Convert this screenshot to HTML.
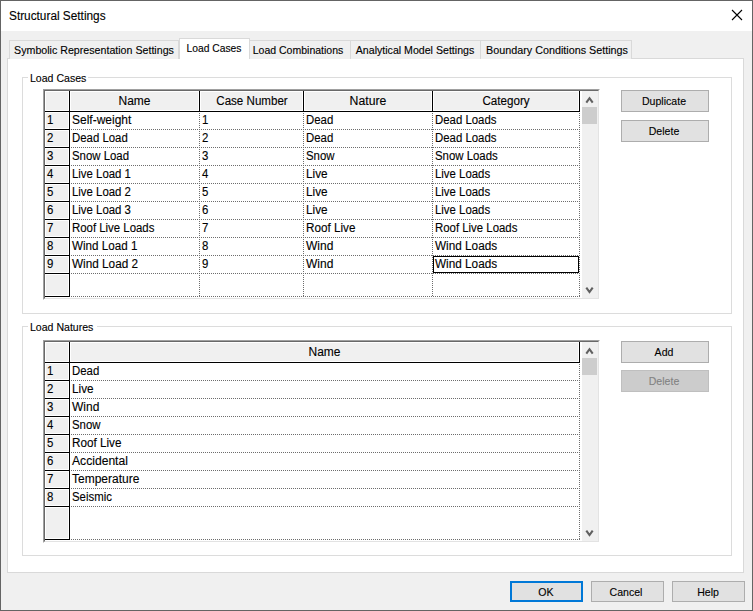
<!DOCTYPE html><html><head><meta charset="utf-8"><style>
*{box-sizing:border-box;margin:0;padding:0}
html,body{width:753px;height:611px;overflow:hidden;background:#f0f0f0}
body{position:relative;font-family:"Liberation Sans",sans-serif;font-size:12px;color:#000}
.a{position:absolute}
i.t{font-style:normal;-webkit-text-stroke:0.12px currentColor;display:inline-block;white-space:nowrap;transform-origin:0 0}
i.c{position:absolute;left:50%;top:0;transform-origin:50% 0}
.win{left:0;top:0;width:753px;height:611px;border:1px solid #646464;background:#f0f0f0}
.title{left:1px;top:1px;width:751px;height:30px;background:#fff}
.lbl{line-height:14px;height:14px}
.tab{background:#f0f0f0;border:1px solid #d9d9d9;border-bottom:none;height:19px;top:40px}
.tab.act{background:#fff;top:38px;height:21px;z-index:3}
.panel{left:7px;top:58px;width:737px;height:515px;background:#fff;border:1px solid #d9d9d9}
.grp{border:1px solid #dcdcdc}
.btn{background:#e1e1e1;border:1px solid #adadad;text-align:center}
.btn.dis{background:#cccccc;border-color:#bfbfbf;color:#838383}
.grid{background:#fff;border:1px solid #fff;border-left-color:#a0a0a0;border-top-color:#a0a0a0}
.gin{position:absolute;left:0;top:0;right:0;bottom:0;border:1px solid #e3e3e3;border-left-color:#696969;border-top-color:#696969}
.hc{position:absolute;background:#f0f0f0;border:1px solid #fff}
.bl{position:absolute;background:#000}
.dh{position:absolute;height:1px;background-image:linear-gradient(to right,#6d6d6d 50%,transparent 50%);background-size:2px 1px;background-position:1px 0}
.dv{position:absolute;width:1px;background-image:linear-gradient(to bottom,#6d6d6d 50%,transparent 50%);background-size:1px 2px;background-position:0 1px}
.sb{position:absolute;background:#f0f0f0}
</style></head><body><div class="a win"></div>
<div class="a title"></div>
<div class="a lbl" style="left:9px;top:9px"><i class="t" style="font-size:12px;transform:scaleX(0.985)">Structural Settings</i></div>
<svg class="a" style="left:727px;top:5px" width="20" height="20" viewBox="0 0 20 20"><path d="M5 5 L15 15 M15 5 L5 15" stroke="#000" stroke-width="1.1" fill="none"/></svg>
<div class="a panel"></div>
<div class="a tab" style="left:9px;width:170px"></div>
<div class="a lbl" style="left:94.25px;width:0;top:43px;z-index:4"><i class="t c" style="font-size:11px;transform:translateX(-50%) scaleX(0.968)">Symbolic Representation Settings</i></div>
<div class="a tab act" style="left:179px;width:71px"></div>
<div class="a lbl" style="left:213.85px;width:0;top:41px;z-index:4"><i class="t c" style="font-size:11px;transform:translateX(-50%) scaleX(0.936)">Load Cases</i></div>
<div class="a tab" style="left:249px;width:102px"></div>
<div class="a lbl" style="left:298.4px;width:0;top:43px;z-index:4"><i class="t c" style="font-size:11px;transform:translateX(-50%) scaleX(0.955)">Load Combinations</i></div>
<div class="a tab" style="left:350px;width:131px"></div>
<div class="a lbl" style="left:415.2px;width:0;top:43px;z-index:4"><i class="t c" style="font-size:11px;transform:translateX(-50%) scaleX(0.964)">Analytical Model Settings</i></div>
<div class="a tab" style="left:480px;width:152px"></div>
<div class="a lbl" style="left:556.8px;width:0;top:43px;z-index:4"><i class="t c" style="font-size:11px;transform:translateX(-50%) scaleX(0.979)">Boundary Conditions Settings</i></div>
<div class="a grp" style="left:22px;top:77px;width:710px;height:237px"></div>
<div class="a" style="left:28px;top:76px;width:60px;height:3px;background:#fff"></div>
<div class="a lbl" style="left:30px;top:71px"><i class="t" style="font-size:11px;transform:scaleX(0.96)">Load Cases</i></div>
<div class="a grp" style="left:22px;top:326px;width:710px;height:230px"></div>
<div class="a" style="left:28px;top:325px;width:69px;height:3px;background:#fff"></div>
<div class="a lbl" style="left:30px;top:320px"><i class="t" style="font-size:11px;transform:scaleX(0.96)">Load Natures</i></div>
<div class="a grid" style="left:43px;top:89px;width:557px;height:211px"><div class="gin"></div></div>
<div class="hc" style="left:45px;top:91px;width:24px;height:20px"></div>
<div class="hc" style="left:70px;top:91px;width:129px;height:20px"></div>
<div class="a lbl" style="left:70px;width:129px;top:94px"><i class="t c" style="font-size:12px;transform:translateX(-50%) scaleX(1.0)">Name</i></div>
<div class="hc" style="left:200px;top:91px;width:103px;height:20px"></div>
<div class="a lbl" style="left:200px;width:103px;top:94px"><i class="t c" style="font-size:12px;transform:translateX(-50%) scaleX(0.965)">Case Number</i></div>
<div class="hc" style="left:304px;top:91px;width:128px;height:20px"></div>
<div class="a lbl" style="left:304px;width:128px;top:94px"><i class="t c" style="font-size:12px;transform:translateX(-50%) scaleX(1.02)">Nature</i></div>
<div class="hc" style="left:433px;top:91px;width:146px;height:20px"></div>
<div class="a lbl" style="left:433px;width:146px;top:94px"><i class="t c" style="font-size:12px;transform:translateX(-50%) scaleX(0.97)">Category</i></div>
<div class="bl" style="left:69px;top:91px;width:1px;height:21px"></div>
<div class="bl" style="left:199px;top:91px;width:1px;height:21px"></div>
<div class="bl" style="left:303px;top:91px;width:1px;height:21px"></div>
<div class="bl" style="left:432px;top:91px;width:1px;height:21px"></div>
<div class="bl" style="left:579px;top:91px;width:1px;height:21px"></div>
<div class="bl" style="left:45px;top:111px;width:535px;height:1px"></div>
<div class="hc" style="left:45px;top:112px;width:24px;height:17px"></div>
<div class="bl" style="left:45px;top:129px;width:25px;height:1px"></div>
<div class="bl" style="left:69px;top:112px;width:1px;height:18px"></div>
<div class="dh" style="left:70px;top:129px;width:510px"></div>
<div class="dv" style="left:199px;top:112px;height:18px"></div>
<div class="dv" style="left:303px;top:112px;height:18px"></div>
<div class="dv" style="left:432px;top:112px;height:18px"></div>
<div class="dv" style="left:579px;top:112px;height:18px"></div>
<div class="a lbl" style="left:47px;top:113px"><i class="t" style="font-size:12px;transform:scaleX(0.95)">1</i></div>
<div class="a lbl" style="left:72px;top:113px"><i class="t" style="font-size:12px;transform:scaleX(1.0)">Self-weight</i></div>
<div class="a lbl" style="left:202px;top:113px"><i class="t" style="font-size:12px;transform:scaleX(0.95)">1</i></div>
<div class="a lbl" style="left:306px;top:113px"><i class="t" style="font-size:12px;transform:scaleX(0.95)">Dead</i></div>
<div class="a lbl" style="left:435px;top:113px"><i class="t" style="font-size:12px;transform:scaleX(0.95)">Dead Loads</i></div>
<div class="hc" style="left:45px;top:130px;width:24px;height:17px"></div>
<div class="bl" style="left:45px;top:147px;width:25px;height:1px"></div>
<div class="bl" style="left:69px;top:130px;width:1px;height:18px"></div>
<div class="dh" style="left:70px;top:147px;width:510px"></div>
<div class="dv" style="left:199px;top:130px;height:18px"></div>
<div class="dv" style="left:303px;top:130px;height:18px"></div>
<div class="dv" style="left:432px;top:130px;height:18px"></div>
<div class="dv" style="left:579px;top:130px;height:18px"></div>
<div class="a lbl" style="left:47px;top:131px"><i class="t" style="font-size:12px;transform:scaleX(0.95)">2</i></div>
<div class="a lbl" style="left:72px;top:131px"><i class="t" style="font-size:12px;transform:scaleX(0.95)">Dead Load</i></div>
<div class="a lbl" style="left:202px;top:131px"><i class="t" style="font-size:12px;transform:scaleX(0.95)">2</i></div>
<div class="a lbl" style="left:306px;top:131px"><i class="t" style="font-size:12px;transform:scaleX(0.95)">Dead</i></div>
<div class="a lbl" style="left:435px;top:131px"><i class="t" style="font-size:12px;transform:scaleX(0.95)">Dead Loads</i></div>
<div class="hc" style="left:45px;top:148px;width:24px;height:17px"></div>
<div class="bl" style="left:45px;top:165px;width:25px;height:1px"></div>
<div class="bl" style="left:69px;top:148px;width:1px;height:18px"></div>
<div class="dh" style="left:70px;top:165px;width:510px"></div>
<div class="dv" style="left:199px;top:148px;height:18px"></div>
<div class="dv" style="left:303px;top:148px;height:18px"></div>
<div class="dv" style="left:432px;top:148px;height:18px"></div>
<div class="dv" style="left:579px;top:148px;height:18px"></div>
<div class="a lbl" style="left:47px;top:149px"><i class="t" style="font-size:12px;transform:scaleX(0.95)">3</i></div>
<div class="a lbl" style="left:72px;top:149px"><i class="t" style="font-size:12px;transform:scaleX(0.95)">Snow Load</i></div>
<div class="a lbl" style="left:202px;top:149px"><i class="t" style="font-size:12px;transform:scaleX(0.95)">3</i></div>
<div class="a lbl" style="left:306px;top:149px"><i class="t" style="font-size:12px;transform:scaleX(0.95)">Snow</i></div>
<div class="a lbl" style="left:435px;top:149px"><i class="t" style="font-size:12px;transform:scaleX(0.95)">Snow Loads</i></div>
<div class="hc" style="left:45px;top:166px;width:24px;height:17px"></div>
<div class="bl" style="left:45px;top:183px;width:25px;height:1px"></div>
<div class="bl" style="left:69px;top:166px;width:1px;height:18px"></div>
<div class="dh" style="left:70px;top:183px;width:510px"></div>
<div class="dv" style="left:199px;top:166px;height:18px"></div>
<div class="dv" style="left:303px;top:166px;height:18px"></div>
<div class="dv" style="left:432px;top:166px;height:18px"></div>
<div class="dv" style="left:579px;top:166px;height:18px"></div>
<div class="a lbl" style="left:47px;top:167px"><i class="t" style="font-size:12px;transform:scaleX(0.95)">4</i></div>
<div class="a lbl" style="left:72px;top:167px"><i class="t" style="font-size:12px;transform:scaleX(0.95)">Live Load 1</i></div>
<div class="a lbl" style="left:202px;top:167px"><i class="t" style="font-size:12px;transform:scaleX(0.95)">4</i></div>
<div class="a lbl" style="left:306px;top:167px"><i class="t" style="font-size:12px;transform:scaleX(0.98)">Live</i></div>
<div class="a lbl" style="left:435px;top:167px"><i class="t" style="font-size:12px;transform:scaleX(0.95)">Live Loads</i></div>
<div class="hc" style="left:45px;top:184px;width:24px;height:17px"></div>
<div class="bl" style="left:45px;top:201px;width:25px;height:1px"></div>
<div class="bl" style="left:69px;top:184px;width:1px;height:18px"></div>
<div class="dh" style="left:70px;top:201px;width:510px"></div>
<div class="dv" style="left:199px;top:184px;height:18px"></div>
<div class="dv" style="left:303px;top:184px;height:18px"></div>
<div class="dv" style="left:432px;top:184px;height:18px"></div>
<div class="dv" style="left:579px;top:184px;height:18px"></div>
<div class="a lbl" style="left:47px;top:185px"><i class="t" style="font-size:12px;transform:scaleX(0.95)">5</i></div>
<div class="a lbl" style="left:72px;top:185px"><i class="t" style="font-size:12px;transform:scaleX(0.95)">Live Load 2</i></div>
<div class="a lbl" style="left:202px;top:185px"><i class="t" style="font-size:12px;transform:scaleX(0.95)">5</i></div>
<div class="a lbl" style="left:306px;top:185px"><i class="t" style="font-size:12px;transform:scaleX(0.98)">Live</i></div>
<div class="a lbl" style="left:435px;top:185px"><i class="t" style="font-size:12px;transform:scaleX(0.95)">Live Loads</i></div>
<div class="hc" style="left:45px;top:202px;width:24px;height:17px"></div>
<div class="bl" style="left:45px;top:219px;width:25px;height:1px"></div>
<div class="bl" style="left:69px;top:202px;width:1px;height:18px"></div>
<div class="dh" style="left:70px;top:219px;width:510px"></div>
<div class="dv" style="left:199px;top:202px;height:18px"></div>
<div class="dv" style="left:303px;top:202px;height:18px"></div>
<div class="dv" style="left:432px;top:202px;height:18px"></div>
<div class="dv" style="left:579px;top:202px;height:18px"></div>
<div class="a lbl" style="left:47px;top:203px"><i class="t" style="font-size:12px;transform:scaleX(0.95)">6</i></div>
<div class="a lbl" style="left:72px;top:203px"><i class="t" style="font-size:12px;transform:scaleX(0.95)">Live Load 3</i></div>
<div class="a lbl" style="left:202px;top:203px"><i class="t" style="font-size:12px;transform:scaleX(0.95)">6</i></div>
<div class="a lbl" style="left:306px;top:203px"><i class="t" style="font-size:12px;transform:scaleX(0.98)">Live</i></div>
<div class="a lbl" style="left:435px;top:203px"><i class="t" style="font-size:12px;transform:scaleX(0.95)">Live Loads</i></div>
<div class="hc" style="left:45px;top:220px;width:24px;height:17px"></div>
<div class="bl" style="left:45px;top:237px;width:25px;height:1px"></div>
<div class="bl" style="left:69px;top:220px;width:1px;height:18px"></div>
<div class="dh" style="left:70px;top:237px;width:510px"></div>
<div class="dv" style="left:199px;top:220px;height:18px"></div>
<div class="dv" style="left:303px;top:220px;height:18px"></div>
<div class="dv" style="left:432px;top:220px;height:18px"></div>
<div class="dv" style="left:579px;top:220px;height:18px"></div>
<div class="a lbl" style="left:47px;top:221px"><i class="t" style="font-size:12px;transform:scaleX(0.95)">7</i></div>
<div class="a lbl" style="left:72px;top:221px"><i class="t" style="font-size:12px;transform:scaleX(0.95)">Roof Live Loads</i></div>
<div class="a lbl" style="left:202px;top:221px"><i class="t" style="font-size:12px;transform:scaleX(0.95)">7</i></div>
<div class="a lbl" style="left:306px;top:221px"><i class="t" style="font-size:12px;transform:scaleX(0.975)">Roof Live</i></div>
<div class="a lbl" style="left:435px;top:221px"><i class="t" style="font-size:12px;transform:scaleX(0.95)">Roof Live Loads</i></div>
<div class="hc" style="left:45px;top:238px;width:24px;height:17px"></div>
<div class="bl" style="left:45px;top:255px;width:25px;height:1px"></div>
<div class="bl" style="left:69px;top:238px;width:1px;height:18px"></div>
<div class="dh" style="left:70px;top:255px;width:510px"></div>
<div class="dv" style="left:199px;top:238px;height:18px"></div>
<div class="dv" style="left:303px;top:238px;height:18px"></div>
<div class="dv" style="left:432px;top:238px;height:18px"></div>
<div class="dv" style="left:579px;top:238px;height:18px"></div>
<div class="a lbl" style="left:47px;top:239px"><i class="t" style="font-size:12px;transform:scaleX(0.95)">8</i></div>
<div class="a lbl" style="left:72px;top:239px"><i class="t" style="font-size:12px;transform:scaleX(0.97)">Wind Load 1</i></div>
<div class="a lbl" style="left:202px;top:239px"><i class="t" style="font-size:12px;transform:scaleX(0.95)">8</i></div>
<div class="a lbl" style="left:306px;top:239px"><i class="t" style="font-size:12px;transform:scaleX(1.0)">Wind</i></div>
<div class="a lbl" style="left:435px;top:239px"><i class="t" style="font-size:12px;transform:scaleX(0.98)">Wind Loads</i></div>
<div class="hc" style="left:45px;top:256px;width:24px;height:17px"></div>
<div class="bl" style="left:45px;top:273px;width:25px;height:1px"></div>
<div class="bl" style="left:69px;top:256px;width:1px;height:18px"></div>
<div class="dh" style="left:70px;top:273px;width:510px"></div>
<div class="dv" style="left:199px;top:256px;height:18px"></div>
<div class="dv" style="left:303px;top:256px;height:18px"></div>
<div class="dv" style="left:432px;top:256px;height:18px"></div>
<div class="dv" style="left:579px;top:256px;height:18px"></div>
<div class="a lbl" style="left:47px;top:257px"><i class="t" style="font-size:12px;transform:scaleX(0.95)">9</i></div>
<div class="a lbl" style="left:72px;top:257px"><i class="t" style="font-size:12px;transform:scaleX(0.98)">Wind Load 2</i></div>
<div class="a lbl" style="left:202px;top:257px"><i class="t" style="font-size:12px;transform:scaleX(0.95)">9</i></div>
<div class="a lbl" style="left:306px;top:257px"><i class="t" style="font-size:12px;transform:scaleX(1.0)">Wind</i></div>
<div class="a lbl" style="left:435px;top:257px"><i class="t" style="font-size:12px;transform:scaleX(0.98)">Wind Loads</i></div>
<div class="hc" style="left:45px;top:274px;width:24px;height:22px"></div>
<div class="bl" style="left:45px;top:296px;width:25px;height:1px"></div>
<div class="bl" style="left:69px;top:274px;width:1px;height:23px"></div>
<div class="dh" style="left:70px;top:296px;width:510px"></div>
<div class="dv" style="left:199px;top:274px;height:23px"></div>
<div class="dv" style="left:303px;top:274px;height:23px"></div>
<div class="dv" style="left:432px;top:274px;height:23px"></div>
<div class="dv" style="left:579px;top:274px;height:23px"></div>
<div class="a" style="left:433px;top:256px;width:146px;height:17px;border:1px solid #000"></div>
<div class="sb" style="left:582px;top:91px;width:16px;height:207px"></div>
<div class="sb" style="left:582px;top:107px;width:15px;height:17px;background:#cdcdcd"></div>
<svg class="a" style="left:580px;top:89px" width="20" height="20" viewBox="580 89 20 20"><path d="M586.3 102.6 L589.5 98.2 L592.7 102.6" stroke="#606060" stroke-width="2.1" stroke-linejoin="miter" fill="none"/></svg>
<svg class="a" style="left:580px;top:278px" width="20" height="20" viewBox="580 278 20 20"><path d="M586.3 287.6 L589.5 292 L592.7 287.6" stroke="#606060" stroke-width="2.1" stroke-linejoin="miter" fill="none"/></svg>
<div class="a grid" style="left:43px;top:340px;width:557px;height:203px"><div class="gin"></div></div>
<div class="hc" style="left:45px;top:342px;width:24px;height:20px"></div>
<div class="hc" style="left:70px;top:342px;width:509px;height:20px"></div>
<div class="a lbl" style="left:70px;width:509px;top:345px"><i class="t c" style="font-size:12px;transform:translateX(-50%) scaleX(1.0)">Name</i></div>
<div class="bl" style="left:69px;top:342px;width:1px;height:21px"></div>
<div class="bl" style="left:579px;top:342px;width:1px;height:21px"></div>
<div class="bl" style="left:45px;top:362px;width:535px;height:1px"></div>
<div class="hc" style="left:45px;top:363px;width:24px;height:17px"></div>
<div class="bl" style="left:45px;top:380px;width:25px;height:1px"></div>
<div class="bl" style="left:69px;top:363px;width:1px;height:18px"></div>
<div class="dh" style="left:70px;top:380px;width:510px"></div>
<div class="dv" style="left:579px;top:363px;height:18px"></div>
<div class="a lbl" style="left:47px;top:364px"><i class="t" style="font-size:12px;transform:scaleX(0.95)">1</i></div>
<div class="a lbl" style="left:72px;top:364px"><i class="t" style="font-size:12px;transform:scaleX(0.95)">Dead</i></div>
<div class="hc" style="left:45px;top:381px;width:24px;height:17px"></div>
<div class="bl" style="left:45px;top:398px;width:25px;height:1px"></div>
<div class="bl" style="left:69px;top:381px;width:1px;height:18px"></div>
<div class="dh" style="left:70px;top:398px;width:510px"></div>
<div class="dv" style="left:579px;top:381px;height:18px"></div>
<div class="a lbl" style="left:47px;top:382px"><i class="t" style="font-size:12px;transform:scaleX(0.95)">2</i></div>
<div class="a lbl" style="left:72px;top:382px"><i class="t" style="font-size:12px;transform:scaleX(0.98)">Live</i></div>
<div class="hc" style="left:45px;top:399px;width:24px;height:17px"></div>
<div class="bl" style="left:45px;top:416px;width:25px;height:1px"></div>
<div class="bl" style="left:69px;top:399px;width:1px;height:18px"></div>
<div class="dh" style="left:70px;top:416px;width:510px"></div>
<div class="dv" style="left:579px;top:399px;height:18px"></div>
<div class="a lbl" style="left:47px;top:400px"><i class="t" style="font-size:12px;transform:scaleX(0.95)">3</i></div>
<div class="a lbl" style="left:72px;top:400px"><i class="t" style="font-size:12px;transform:scaleX(1.0)">Wind</i></div>
<div class="hc" style="left:45px;top:417px;width:24px;height:17px"></div>
<div class="bl" style="left:45px;top:434px;width:25px;height:1px"></div>
<div class="bl" style="left:69px;top:417px;width:1px;height:18px"></div>
<div class="dh" style="left:70px;top:434px;width:510px"></div>
<div class="dv" style="left:579px;top:417px;height:18px"></div>
<div class="a lbl" style="left:47px;top:418px"><i class="t" style="font-size:12px;transform:scaleX(0.95)">4</i></div>
<div class="a lbl" style="left:72px;top:418px"><i class="t" style="font-size:12px;transform:scaleX(0.95)">Snow</i></div>
<div class="hc" style="left:45px;top:435px;width:24px;height:17px"></div>
<div class="bl" style="left:45px;top:452px;width:25px;height:1px"></div>
<div class="bl" style="left:69px;top:435px;width:1px;height:18px"></div>
<div class="dh" style="left:70px;top:452px;width:510px"></div>
<div class="dv" style="left:579px;top:435px;height:18px"></div>
<div class="a lbl" style="left:47px;top:436px"><i class="t" style="font-size:12px;transform:scaleX(0.95)">5</i></div>
<div class="a lbl" style="left:72px;top:436px"><i class="t" style="font-size:12px;transform:scaleX(0.975)">Roof Live</i></div>
<div class="hc" style="left:45px;top:453px;width:24px;height:17px"></div>
<div class="bl" style="left:45px;top:470px;width:25px;height:1px"></div>
<div class="bl" style="left:69px;top:453px;width:1px;height:18px"></div>
<div class="dh" style="left:70px;top:470px;width:510px"></div>
<div class="dv" style="left:579px;top:453px;height:18px"></div>
<div class="a lbl" style="left:47px;top:454px"><i class="t" style="font-size:12px;transform:scaleX(0.95)">6</i></div>
<div class="a lbl" style="left:72px;top:454px"><i class="t" style="font-size:12px;transform:scaleX(1.01)">Accidental</i></div>
<div class="hc" style="left:45px;top:471px;width:24px;height:17px"></div>
<div class="bl" style="left:45px;top:488px;width:25px;height:1px"></div>
<div class="bl" style="left:69px;top:471px;width:1px;height:18px"></div>
<div class="dh" style="left:70px;top:488px;width:510px"></div>
<div class="dv" style="left:579px;top:471px;height:18px"></div>
<div class="a lbl" style="left:47px;top:472px"><i class="t" style="font-size:12px;transform:scaleX(0.95)">7</i></div>
<div class="a lbl" style="left:72px;top:472px"><i class="t" style="font-size:12px;transform:scaleX(1.0)">Temperature</i></div>
<div class="hc" style="left:45px;top:489px;width:24px;height:17px"></div>
<div class="bl" style="left:45px;top:506px;width:25px;height:1px"></div>
<div class="bl" style="left:69px;top:489px;width:1px;height:18px"></div>
<div class="dh" style="left:70px;top:506px;width:510px"></div>
<div class="dv" style="left:579px;top:489px;height:18px"></div>
<div class="a lbl" style="left:47px;top:490px"><i class="t" style="font-size:12px;transform:scaleX(0.95)">8</i></div>
<div class="a lbl" style="left:72px;top:490px"><i class="t" style="font-size:12px;transform:scaleX(0.95)">Seismic</i></div>
<div class="hc" style="left:45px;top:507px;width:24px;height:32px"></div>
<div class="bl" style="left:45px;top:539px;width:25px;height:1px"></div>
<div class="bl" style="left:69px;top:507px;width:1px;height:33px"></div>
<div class="dh" style="left:70px;top:539px;width:510px"></div>
<div class="dv" style="left:579px;top:507px;height:33px"></div>
<div class="sb" style="left:582px;top:342px;width:16px;height:199px"></div>
<div class="sb" style="left:582px;top:358px;width:15px;height:17px;background:#cdcdcd"></div>
<svg class="a" style="left:580px;top:340px" width="20" height="20" viewBox="580 340 20 20"><path d="M586.3 353.6 L589.5 349.2 L592.7 353.6" stroke="#606060" stroke-width="2.1" stroke-linejoin="miter" fill="none"/></svg>
<svg class="a" style="left:580px;top:521px" width="20" height="20" viewBox="580 521 20 20"><path d="M586.3 530.6 L589.5 535 L592.7 530.6" stroke="#606060" stroke-width="2.1" stroke-linejoin="miter" fill="none"/></svg>
<div class="a btn " style="left:621px;top:90px;width:88px;height:22px"><div class="a lbl" style="left:-1px;width:100%;top:3px"><i class="t c" style="font-size:11px;transform:translateX(-50%) scaleX(0.96)">Duplicate</i></div></div>
<div class="a btn " style="left:621px;top:120px;width:88px;height:22px"><div class="a lbl" style="left:-1px;width:100%;top:3px"><i class="t c" style="font-size:11px;transform:translateX(-50%) scaleX(0.96)">Delete</i></div></div>
<div class="a btn " style="left:621px;top:341px;width:88px;height:22px"><div class="a lbl" style="left:-1px;width:100%;top:3px"><i class="t c" style="font-size:11px;transform:translateX(-50%) scaleX(0.96)">Add</i></div></div>
<div class="a btn dis" style="left:621px;top:370px;width:88px;height:22px"><div class="a lbl" style="left:-1px;width:100%;top:3px"><i class="t c" style="font-size:11px;transform:translateX(-50%) scaleX(0.96)">Delete</i></div></div>
<div class="a btn" style="left:510px;top:581px;width:73px;height:21px;border:2px solid #0078d7"><div class="a lbl" style="left:-3px;width:73px;top:2px"><i class="t c" style="font-size:11px;transform:translateX(-50%) scaleX(0.96)">OK</i></div></div>
<div class="a btn " style="left:591px;top:581px;width:73px;height:21px"><div class="a lbl" style="left:-2px;width:100%;top:3px"><i class="t c" style="font-size:11px;transform:translateX(-50%) scaleX(0.96)">Cancel</i></div></div>
<div class="a btn " style="left:672px;top:581px;width:73px;height:21px"><div class="a lbl" style="left:-1px;width:100%;top:3px"><i class="t c" style="font-size:11px;transform:translateX(-50%) scaleX(0.96)">Help</i></div></div></body></html>
